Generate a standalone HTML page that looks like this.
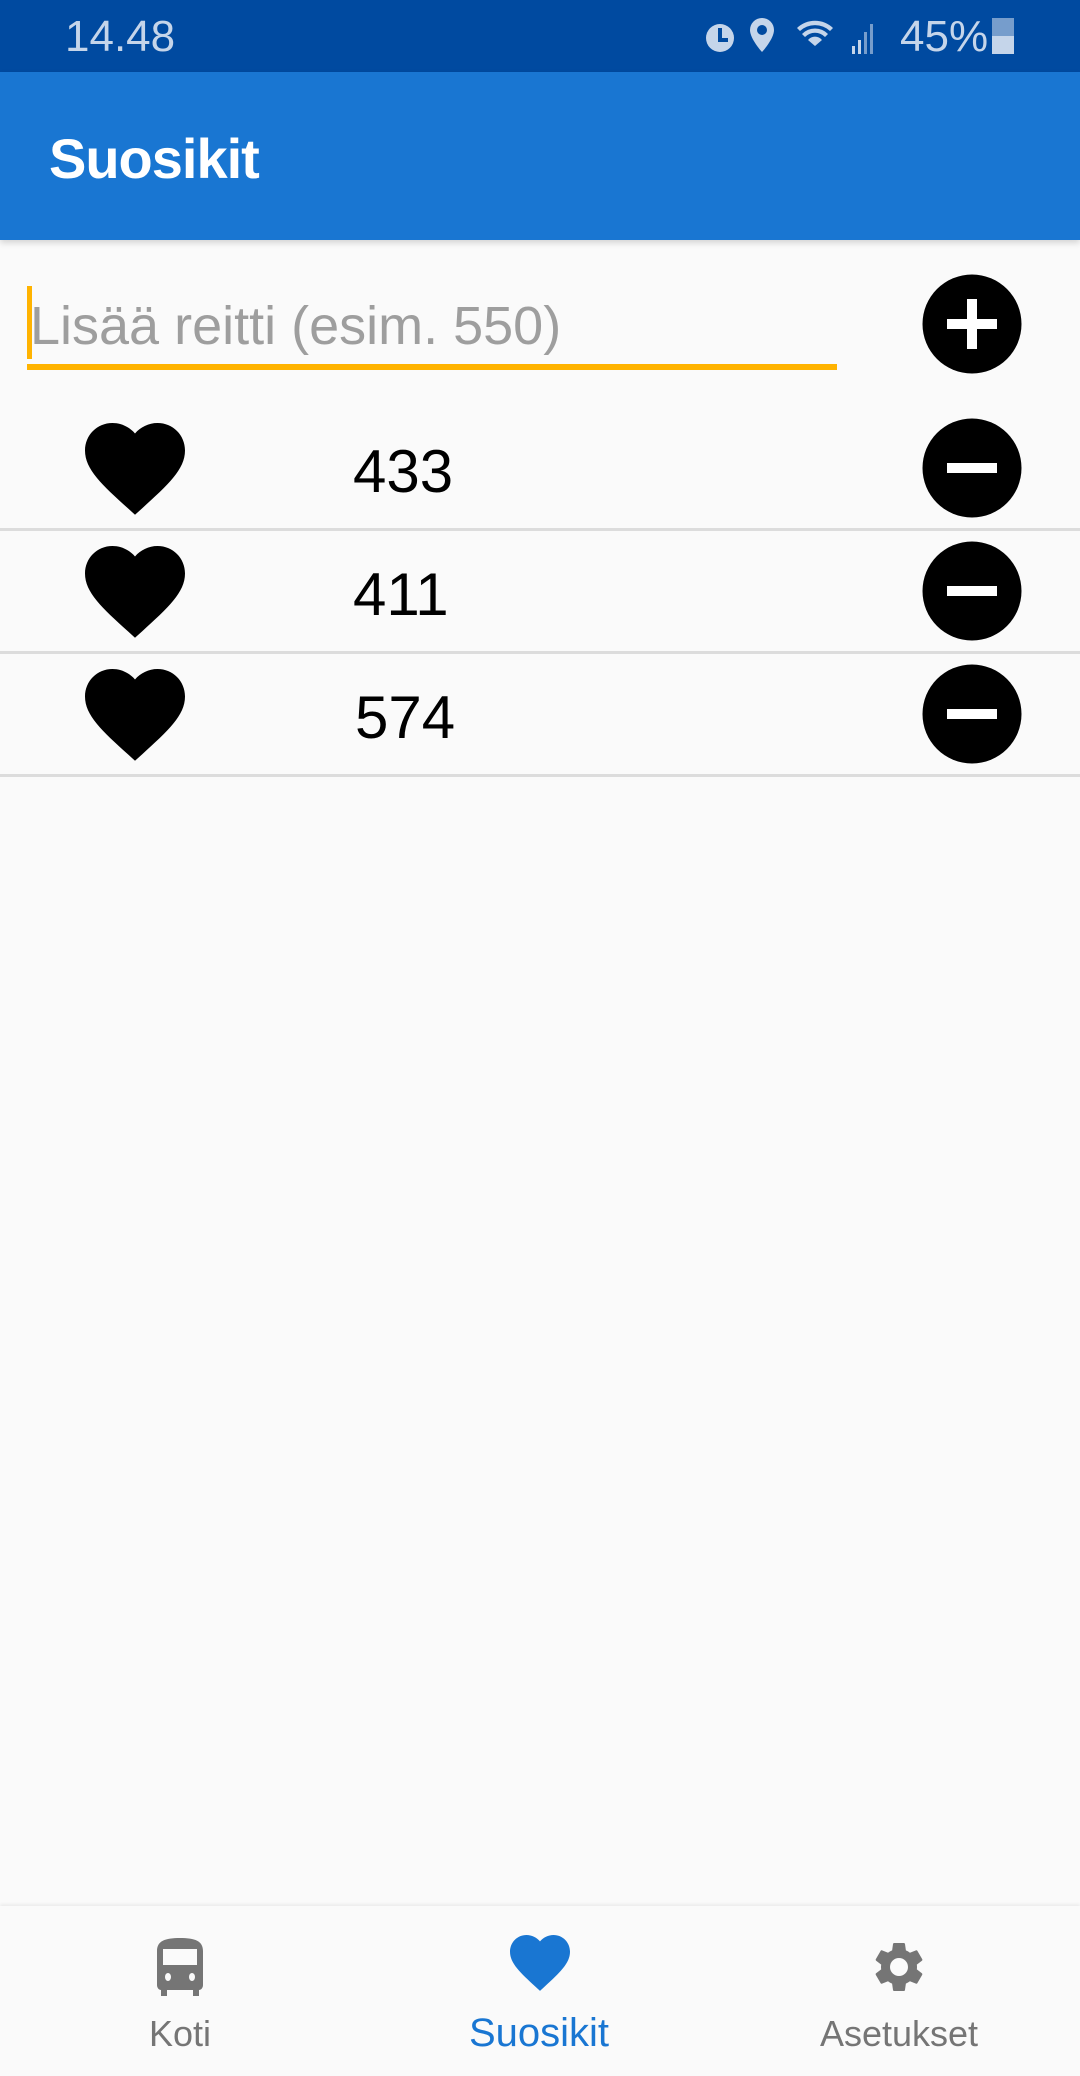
<!DOCTYPE html>
<html><head><meta charset="utf-8"><style>
*{margin:0;padding:0;box-sizing:border-box}
body{width:1080px;height:2076px;background:#fafafa;font-family:"Liberation Sans",sans-serif;position:relative;overflow:hidden}
.abs{position:absolute}
</style></head><body>
<div class="abs" style="left:0;top:0;width:1080px;height:72px;background:#004aa0"></div>
<div class="abs" style="left:65px;top:13px;font-size:44px;color:#c5d5ea;line-height:48px">14.48</div>
<div class="abs" style="left:900px;top:13px;font-size:44px;color:#c5d5ea;line-height:48px">45%</div>
<svg class="abs" style="left:700px;top:16px" width="320" height="40" viewBox="0 0 320 40">
<g fill="#c5d5ea">
<circle cx="20" cy="22" r="14"/><rect x="18" y="12" width="4" height="12" fill="#004aa0"/><rect x="18" y="22" width="10" height="4" fill="#004aa0"/>
<path d="M62 2a12 12 0 0 1 12 12c0 9-12 22-12 22s-12-13-12-22A12 12 0 0 1 62 2z"/><circle cx="62" cy="14" r="5" fill="#004aa0"/>
<path d="M97 12a26 26 0 0 1 36 0l-3 3a22 22 0 0 0-30 0z M102 18a18 18 0 0 1 26 0l-3 3a14 14 0 0 0-20 0z M108 24a9 9 0 0 1 14 0l-7 6z"/>
<rect x="152" y="30" width="3" height="8"/><rect x="158" y="24" width="3" height="14"/><rect x="164" y="16" width="3" height="22" opacity=".6"/><rect x="170" y="8" width="3" height="30" opacity=".6"/>
<rect x="292" y="2" width="22" height="36" opacity=".6"/><rect x="292" y="20" width="22" height="18"/>
</g></svg>
<div class="abs" style="left:0;top:72px;width:1080px;height:168px;background:#1976d2;box-shadow:0 3px 6px rgba(0,0,0,.15)"></div>
<div class="abs" style="left:49px;top:125px;font-size:56px;font-weight:bold;color:#fff;line-height:68px;letter-spacing:-1px">Suosikit</div>
<div class="abs" style="left:27px;top:286px;width:5px;height:73px;background:#ffb300"></div>
<div class="abs" style="left:30px;top:293px;font-size:54px;color:#9e9e9e;line-height:66px">Lisää reitti (esim. 550)</div>
<div class="abs" style="left:27px;top:364px;width:810px;height:6px;background:#ffb300"></div>
<svg class="abs" style="left:922px;top:274px" width="100" height="100"><circle cx="50" cy="50" r="49.5"/><rect x="25" y="45" width="50" height="10" fill="#fff"/><rect x="45" y="25" width="10" height="50" fill="#fff"/></svg>

<svg class="abs" style="left:85px;top:423px" width="100" height="92" viewBox="2 3 20 18.4" preserveAspectRatio="none"><path d="M12 21.35l-1.45-1.32C5.4 15.36 2 12.28 2 8.5 2 5.42 4.42 3 7.5 3c1.74 0 3.41.81 4.5 2.09C13.09 3.81 14.76 3 16.5 3 19.58 3 22 5.42 22 8.5c0 3.78-3.4 6.86-8.55 11.54z"/></svg>
<div class="abs" style="left:353px;top:438px;font-size:60px;line-height:68px">433</div>
<svg class="abs" style="left:922px;top:418px" width="100" height="100"><circle cx="50" cy="50" r="49.5"/><rect x="25" y="45" width="50" height="10" fill="#fff"/></svg>
<div class="abs" style="left:0;top:528px;width:1080px;height:3px;background:#dcdcdc"></div>

<svg class="abs" style="left:85px;top:546px" width="100" height="92" viewBox="2 3 20 18.4" preserveAspectRatio="none"><path d="M12 21.35l-1.45-1.32C5.4 15.36 2 12.28 2 8.5 2 5.42 4.42 3 7.5 3c1.74 0 3.41.81 4.5 2.09C13.09 3.81 14.76 3 16.5 3 19.58 3 22 5.42 22 8.5c0 3.78-3.4 6.86-8.55 11.54z"/></svg>
<div class="abs" style="left:353px;top:561px;font-size:60px;line-height:68px">411</div>
<svg class="abs" style="left:922px;top:541px" width="100" height="100"><circle cx="50" cy="50" r="49.5"/><rect x="25" y="45" width="50" height="10" fill="#fff"/></svg>
<div class="abs" style="left:0;top:651px;width:1080px;height:3px;background:#dcdcdc"></div>

<svg class="abs" style="left:85px;top:669px" width="100" height="92" viewBox="2 3 20 18.4" preserveAspectRatio="none"><path d="M12 21.35l-1.45-1.32C5.4 15.36 2 12.28 2 8.5 2 5.42 4.42 3 7.5 3c1.74 0 3.41.81 4.5 2.09C13.09 3.81 14.76 3 16.5 3 19.58 3 22 5.42 22 8.5c0 3.78-3.4 6.86-8.55 11.54z"/></svg>
<div class="abs" style="left:355px;top:684px;font-size:60px;line-height:68px">574</div>
<svg class="abs" style="left:922px;top:664px" width="100" height="100"><circle cx="50" cy="50" r="49.5"/><rect x="25" y="45" width="50" height="10" fill="#fff"/></svg>
<div class="abs" style="left:0;top:774px;width:1080px;height:3px;background:#dcdcdc"></div>

<div class="abs" style="left:0;top:1906px;width:1080px;height:170px;background:#fafafa;box-shadow:0 -2px 3px rgba(0,0,0,.06)"></div>
<svg class="abs" style="left:153px;top:1937px" width="54" height="60" viewBox="0 0 54 60"><path fill="#757575" d="M4 14C4 4 12 1 27 1s23 3 23 13v34c0 3-2 5-4 5v6h-6v-6H14v6H8v-6c-2 0-4-2-4-5z"/><rect x="10" y="12" width="34" height="16" fill="#fafafa"/><ellipse cx="15" cy="40" rx="3" ry="4" fill="#fafafa"/><ellipse cx="39" cy="40" rx="3" ry="4" fill="#fafafa"/></svg>
<div class="abs" style="left:0;top:2012px;width:360px;text-align:center;font-size:36px;color:#757575;line-height:44px">Koti</div>
<svg class="abs" style="left:510px;top:1935px" width="60" height="56" viewBox="2 3 20 18.4" preserveAspectRatio="none"><path fill="#1976d2" d="M12 21.35l-1.45-1.32C5.4 15.36 2 12.28 2 8.5 2 5.42 4.42 3 7.5 3c1.74 0 3.41.81 4.5 2.09C13.09 3.81 14.76 3 16.5 3 19.58 3 22 5.42 22 8.5c0 3.78-3.4 6.86-8.55 11.54z"/></svg>
<div class="abs" style="left:359px;top:2011px;width:360px;text-align:center;font-size:40px;color:#1976d2;line-height:44px">Suosikit</div>
<svg class="abs" style="left:869px;top:1937px" width="60" height="60" viewBox="0 0 24 24"><path fill="#757575" d="M19.14 12.94c.04-.3.06-.61.06-.94 0-.32-.02-.64-.07-.94l2.030-1.58a.49.49 0 0 0 .12-.61l-1.92-3.32a.49.49 0 0 0-.59-.22l-2.39.96c-.5-.38-1.03-.7-1.62-.94l-.36-2.54a.48.48 0 0 0-.48-.41h-3.84c-.24 0-.43.17-.47.41l-.36 2.54c-.59.24-1.130.57-1.62.94l-2.39-.96c-.22-.08-.47 0-.59.22L2.74 8.87c-.12.21-.08.47.12.61l2.03 1.58c-.05.3-.09.63-.09.94s.02.64.07.94l-2.03 1.58a.49.49 0 0 0-.12.61l1.92 3.32c.12.22.37.29.59.22l2.39-.96c.5.38 1.03.7 1.62.94l.36 2.54c.05.24.24.41.48.41h3.84c.24 0 .44-.17.47-.41l.36-2.54c.59-.24 1.13-.56 1.62-.94l2.39.96c.22.08.47 0 .59-.22l1.92-3.32c.12-.22.07-.47-.12-.61zM12 15.6A3.6 3.6 0 1 1 12 8.4a3.6 3.6 0 0 1 0 7.2z"/></svg>
<div class="abs" style="left:719px;top:2012px;width:360px;text-align:center;font-size:36px;color:#757575;line-height:44px">Asetukset</div>
</body></html>
